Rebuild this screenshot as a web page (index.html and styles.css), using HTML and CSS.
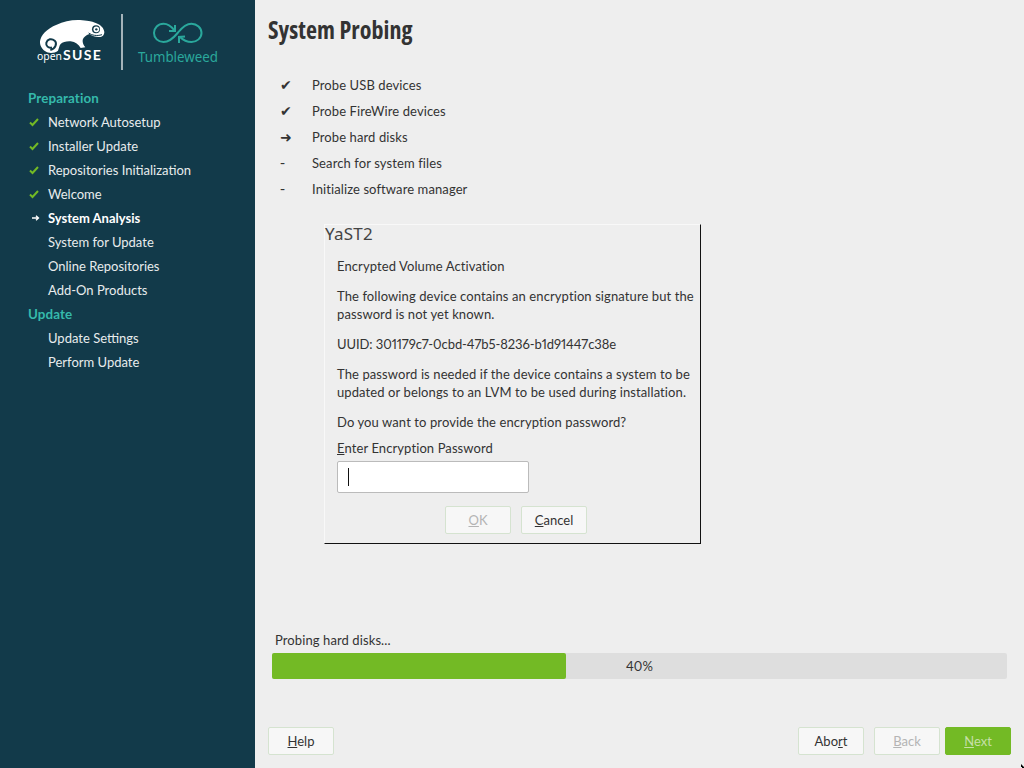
FILE: index.html
```html
<!DOCTYPE html>
<html lang="en">
<head>
<meta charset="utf-8">
<title>System Probing</title>
<link rel="stylesheet" href="styles.css">
</head>
<body>
<aside class="sidebar">
  <svg class="logo" viewBox="0 0 255 80" width="255" height="80">
    <g transform="translate(30 8) scale(.3333)">
      <path class="logo-white" d="M30 100C32 82 50 62 80 50C100 40 125 35 150 36C170 37 185 40 197 45C212 50 222 60 223 72C223 82 216 88 206 87C196 87 186 84 178 78C168 82 160 88 158 96C157 104 161 112 166 118L152 120C146 110 136 102 122 100C110 99 98 102 92 108C88 113 87 120 84 128C74 136 56 137 46 130C36 124 29 112 30 100Z"/>
      <path class="logo-dark-stroke" d="M66 118C55 122 47 113 49 104C52 93 65 90 74 98C82 106 77 122 61 126"/>
      <path class="logo-mouth" d="M176 75C186 82 200 85 216 80"/>
      <circle class="logo-dark" cx="198" cy="64" r="12"/>
      <circle class="logo-white" cx="199" cy="64" r="8.500"/>
      <circle class="logo-dark" cx="199" cy="64" r="3.500"/>
    </g>
    <text class="logo-open" x="37" y="60">open</text>
    <text class="logo-suse" x="63" y="60">SUSE</text>
    <rect class="logo-rule" x="121" y="14" width="2" height="56"/>
    <path class="logo-loop" d="M174 30C171 26 167 23.700 163.500 23.700C158 23.700 154 28 154 33C154 38 158 42 163.500 42C171 42 175 36 178 32.500C182 27.500 186 23.700 191.500 23.700C197 23.700 201.500 28 201.500 33C201.500 38 197 42 191.500 42C187 42 183 40 180 37"/>
    <path class="logo-loop" d="M175 25L175 31L169 31M179 43L179 37L185 36.500"/>
    <text class="logo-tw" x="138" y="62" textLength="80" lengthAdjust="spacingAndGlyphs">Tumbleweed</text>
  </svg>
  <nav class="steps">
    <div class="step-head">Preparation</div>
    <div class="step"><svg class="step-icon" viewBox="0 0 12 10"><path class="tick" d="M2 5.500L4.500 8L10 2"/></svg>Network Autosetup</div>
    <div class="step"><svg class="step-icon" viewBox="0 0 12 10"><path class="tick" d="M2 5.500L4.500 8L10 2"/></svg>Installer Update</div>
    <div class="step"><svg class="step-icon" viewBox="0 0 12 10"><path class="tick" d="M2 5.500L4.500 8L10 2"/></svg>Repositories Initialization</div>
    <div class="step"><svg class="step-icon" viewBox="0 0 12 10"><path class="tick" d="M2 5.500L4.500 8L10 2"/></svg>Welcome</div>
    <div class="step step-current"><svg class="step-icon" viewBox="0 0 12 10"><path class="arrow" d="M4 5H10.500M8 2.800L10.500 5L8 7.200"/></svg>System Analysis</div>
    <div class="step"><span class="step-icon"></span>System for Update</div>
    <div class="step"><span class="step-icon"></span>Online Repositories</div>
    <div class="step"><span class="step-icon"></span>Add-On Products</div>
    <div class="step-head">Update</div>
    <div class="step"><span class="step-icon"></span>Update Settings</div>
    <div class="step"><span class="step-icon"></span>Perform Update</div>
  </nav>
</aside>
<main class="content">
  <h1 class="title">System Probing</h1>
  <ul class="probes">
    <li class="probe"><span class="probe-mark">✔</span>Probe USB devices</li>
    <li class="probe"><span class="probe-mark">✔</span>Probe FireWire devices</li>
    <li class="probe"><span class="probe-mark">➜</span>Probe hard disks</li>
    <li class="probe"><span class="probe-mark">-</span>Search for system files</li>
    <li class="probe"><span class="probe-mark">-</span>Initialize software manager</li>
  </ul>
  <section class="dialog">
    <div class="dialog-title">YaST2</div>
    <div class="dialog-body">
      <p class="para">Encrypted Volume Activation</p>
      <p class="para">The following device contains an encryption signature but the password is not yet known.</p>
      <p class="para para-uuid">UUID: 301179c7-0cbd-47b5-8236-b1d91447c38e</p>
      <p class="para">The password is needed if the device contains a system to be updated or belongs to an LVM to be used during installation.</p>
      <p class="para">Do you want to provide the encryption password?</p>
      <div class="field-label"><u>E</u>nter Encryption Password</div>
      <div class="input"><span class="caret"></span></div>
      <div class="dialog-actions">
        <button class="btn btn-disabled" type="button"><u>O</u>K</button>
        <button class="btn" type="button"><u>C</u>ancel</button>
      </div>
    </div>
  </section>
  <div class="progress-label">Probing hard disks...</div>
  <div class="progress">
    <div class="progress-fill" style="width:40%"></div>
    <span class="progress-text">40%</span>
  </div>
  <footer class="footer">
    <button class="btn" type="button"><u>H</u>elp</button>
    <div class="footer-right">
      <button class="btn" type="button">Abo<u>r</u>t</button>
      <button class="btn btn-disabled btn-back" type="button"><u>B</u>ack</button>
      <button class="btn btn-next" type="button"><u>N</u>ext</button>
    </div>
  </footer>
</main>
<svg class="pointer" viewBox="0 0 3 4" width="3" height="4"><path d="M0 0L3 3V4H1V3H0Z"/></svg>
</body>
</html>
```

FILE: styles.css
```css
* { box-sizing: border-box; }
html, body { margin: 0; height: 100%; }
body {
  position: relative;
  display: flex;
  width: 1024px;
  height: 768px;
  overflow: hidden;
  background: #eeeeee;
  color: #333;
  font: 13px/18px Lato, "Noto Sans", sans-serif;
  letter-spacing: .1px;
  font-variant-numeric: proportional-nums;
}
.sidebar { flex: 0 0 255px; background: #123a4a; color: #e8eced; }
.logo { display: block; }
.logo-white { fill: #fff; }
.logo-dark { fill: #123a4a; }
.logo-dark-stroke { fill: none; stroke: #123a4a; stroke-width: 6; }
.logo-mouth { fill: none; stroke: #123a4a; stroke-width: 3; }
.logo-open { fill: #fff; font: 10.400px "Noto Sans", sans-serif; letter-spacing: 0; }
.logo-suse { fill: #fff; font: 700 14px Lato, sans-serif; letter-spacing: 1.300px; }
.logo-rule { fill: #a4b3ba; }
.logo-loop { fill: none; stroke: #2aa89c; stroke-width: 2; }
.logo-tw { fill: #2aa89c; font: 14px "Noto Sans", sans-serif; letter-spacing: 0; }
.steps { padding: 6px 0 0 28px; }
.step-head { height: 24px; line-height: 24px; font-size: 13.400px; font-weight: 700; color: #35b9ab; }
.step { display: flex; align-items: center; height: 24px; color: #e8eced; letter-spacing: 0; }
.step-current { font-weight: 700; color: #fff; }
.step-icon { flex: 0 0 12px; width: 12px; height: 10px; margin-right: 8px; }
.tick { fill: none; stroke: #73ba25; stroke-width: 2; }
.arrow { fill: none; stroke: #fff; stroke-width: 1.300; }
.content { flex: 1; display: flex; flex-direction: column; min-width: 0; }
.title {
  margin: 0;
  padding: 13px 0 0 13px;
  height: 72px;
  font: 700 24px/34px "Open Sans", sans-serif;
  font-stretch: 75%;
  letter-spacing: .07px;
  color: #333;
}
.probes { list-style: none; margin: 0; padding: 0 0 0 25px; }
.probe { display: flex; align-items: center; height: 26px; }
.probe-mark { flex: 0 0 32px; font-family: "DejaVu Sans", sans-serif; font-size: 14px; }
.dialog {
  width: 377px;
  height: 320px;
  margin: 22px 0 0 69px;
  border-top: 1px solid #f8f8f8;
  border-left: 1px solid #f8f8f8;
  border-right: 1px solid #111;
  border-bottom: 1px solid #111;
}
.dialog-title { height: 23px; font: 17px/18px "Noto Sans", sans-serif; color: #444; letter-spacing: .2px; }
.dialog-body { padding: 9px 0 0 12px; }
.para { margin: 0 0 12px; line-height: 18px; }
.para-uuid { letter-spacing: -.07px; }
.field-label { margin-top: -4px; height: 18px; }
.input {
  display: flex;
  align-items: center;
  width: 192px;
  height: 32px;
  margin-top: 4px;
  padding-left: 10px;
  background: #fff;
  border: 1px solid #bbb;
  border-radius: 2px;
}
.caret { width: 1px; height: 18px; background: #111; }
.dialog-actions { display: flex; gap: 10px; margin: 13px 0 0 108px; }
.btn {
  width: 66px;
  height: 28px;
  padding: 0;
  background: #f7f7f7;
  border: 1px solid #d5e3d0;
  border-radius: 2px;
  color: #333;
  font: inherit;
}
.btn-disabled { color: #b4b4b4; }
.btn-back { margin-right: -5px; }
.btn-next { background: #73ba25; border-color: #73ba25; color: #c6dfa8; }
.progress-label { margin: 87px 0 0 20px; height: 18px; }
.progress {
  position: relative;
  width: 735px;
  height: 26px;
  margin: 4px 0 0 17px;
  background: #dedede;
  border-radius: 2px;
  text-align: center;
  line-height: 26px;
}
.progress-fill { position: absolute; inset: 0 auto 0 0; background: #73ba25; border-radius: 2px; }
.progress-text { position: relative; }
.footer { display: flex; justify-content: space-between; margin: 48px 13px 0 13px; }
.footer-right { display: flex; gap: 10px; }
.pointer { position: absolute; right: 0; bottom: 0; fill: #000; }
```
